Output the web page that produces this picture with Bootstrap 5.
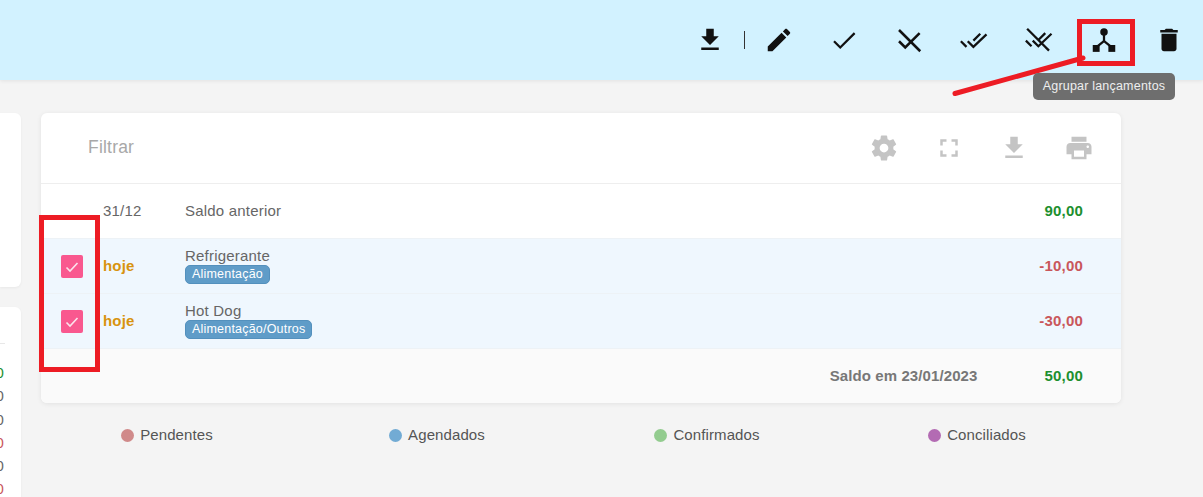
<!DOCTYPE html>
<html lang="pt-BR">
<head>
<meta charset="utf-8">
<title>Lançamentos</title>
<link rel="stylesheet" href="https://cdn.jsdelivr.net/npm/bootstrap@5.3.0/dist/css/bootstrap.min.css">
<style>
html,body{height:497px;overflow:hidden}
body{background:#f4f4f4;font-family:"Liberation Sans",Arial,sans-serif;color:#666;font-size:15px;letter-spacing:.2px;position:relative}
.top-strip{height:80px;background:#d2f2ff;padding-right:2px;box-shadow:0 1px 4px rgba(0,0,0,.08)}
.tool-btn{width:65px;height:80px;padding:0;border:0;background:none}
.tool-btn svg{width:30px;height:30px;fill:#111}
.tool-thin svg{fill:none;stroke:#111;stroke-width:1.8}
.tool-sep{width:1px;height:18px;background:#333;margin:0 1.5px}
.page-body{padding-top:33px}
.side-col{width:21px;margin-right:20px;flex:none}
.side-card{background:#fff;border-radius:0 6px 6px 0;box-shadow:0 1px 3px rgba(0,0,0,.05)}
.side-a{height:174px;margin-bottom:20px}
.side-b{height:200px;padding-top:36px;border-radius:0 6px 0 0}
.side-rule{width:5px;height:1px;background:#e8e8e8;margin-bottom:18px}
.side-num{height:23.3px;line-height:23px;padding-right:17px;white-space:nowrap;display:flex;justify-content:flex-end;font-size:14.5px}
.main-col{width:1080px;flex:none}
.sheet{background:#fff;border-radius:6px;box-shadow:0 1px 5px rgba(0,0,0,.08);overflow:hidden}
.sheet-head{height:71px;padding-left:47px;border-bottom:1px solid #eee}
.filter-label{font-size:17.5px;color:#a8a8a8;flex:1;padding-bottom:2px}
.head-icon{width:65px;display:flex;justify-content:center}
.head-icon svg{width:30px;height:30px;fill:#c4c4c4}
.head-icons{margin-right:9.500px}
.line{height:55px;border-bottom:1px solid #edf2f6;padding-top:1px}
.line-on{background:#eff7fe}
.line-sum{height:54px;background:#fafafa;border-bottom:0}
.cell-check{width:62px;flex:none;padding-left:20px}
.fake-check{width:22px;height:23px;background:#f9588f;border-radius:2px;display:flex;align-items:center;justify-content:center}
.fake-check svg{width:14px;height:14px;fill:none;stroke:#fbe3ec;stroke-width:1.600}
.cell-date{width:82px;flex:none}
.cell-today{color:#d8930f;font-weight:700}
.cell-desc{flex:1;line-height:15px;margin-bottom:1px}
.desc-single{margin-bottom:2px}
.amount{font-weight:700;margin-right:38px}
.pos{color:#1d8f2e}
.neg{color:#c9565a}
.sum-label{font-weight:700;color:#777;letter-spacing:.1px;margin-right:67px}
.cat-tag{display:inline-block;background:#5f9cc8;border:1px solid #5390bd;color:#fff;border-radius:5px;font-size:12.5px;font-weight:400;line-height:17px;padding:0 6px;vertical-align:top;margin-top:2px}
.legend-row{margin:21px 0 0;color:#555}
.legend-item{padding:0 18px 0 0;text-align:center;letter-spacing:.1px}
.dot{display:inline-block;width:13px;height:13px;border-radius:50%;margin-right:6px;vertical-align:-2px}
.mark-box{position:absolute;border:5px solid #ed1c24;pointer-events:none}
.mark-a{left:1077px;top:19px;width:58px;height:47px}
.mark-b{left:39px;top:215px;width:61px;height:157px}
.arrow-line{position:absolute;left:0;top:0;pointer-events:none}
.tip-box{position:absolute;left:1033px;top:73px;width:142px;height:27px;background:#6e6e6e;color:#eee;border-radius:5px;font-size:12.5px;line-height:27px;text-align:center}
</style>
</head>
<body>
<div class="top-strip d-flex justify-content-end align-items-center">
  <button class="tool-btn d-flex align-items-center justify-content-center"><svg viewBox="0 0 24 24"><path d="M19 9h-4V3H9v6H5l7 7 7-7zM5 18v2h14v-2H5z"/></svg></button>
  <div class="tool-sep"></div>
  <button class="tool-btn d-flex align-items-center justify-content-center"><svg viewBox="0 0 24 24"><path d="M3 17.250V21h3.750L17.810 9.940l-3.750-3.750L3 17.250zM20.710 7.040c.39-.39.39-1.020 0-1.410l-2.340-2.340c-.39-.39-1.020-.39-1.410 0l-1.830 1.830 3.750 3.750 1.830-1.830z"/></svg></button>
  <button class="tool-btn tool-thin d-flex align-items-center justify-content-center"><svg viewBox="0 0 24 24"><path d="M4 13l5 5L20.500 6.500"/></svg></button>
  <button class="tool-btn tool-thin d-flex align-items-center justify-content-center"><svg viewBox="0 0 24 24"><path d="M4 13l5 5L20.500 6.500" stroke-width="2"/><path d="M4 4l17 17" stroke-width="2"/></svg></button>
  <button class="tool-btn tool-thin d-flex align-items-center justify-content-center"><svg viewBox="0 0 24 24"><path d="M1.500 13l4.500 4.500M7 13l4.500 4.500L22 7.500M11.500 12.500l5.500-5.500"/></svg></button>
  <button class="tool-btn tool-thin d-flex align-items-center justify-content-center"><svg viewBox="0 0 24 24"><path d="M1.500 12.500l4.500 4.500M7 12.500l4.500 4.500L22 7M11.500 12l5.500-5.500"/><path d="M2.500 3l17.500 17.500"/></svg></button>
  <button class="tool-btn d-flex align-items-center justify-content-center"><svg viewBox="0 0 24 24"><circle cx="12" cy="5.500" r="3"/><rect x="3" y="16" width="5.500" height="5.500"/><rect x="15.500" y="16" width="5.500" height="5.500"/><path d="M11.100 7h1.800v5.300l5 4-1.200 1.400-4.700-3.800-4.700 3.800-1.200-1.400 5-4z"/></svg></button>
  <button class="tool-btn d-flex align-items-center justify-content-center"><svg viewBox="0 0 24 24"><path d="M6 19c0 1.100.9 2 2 2h8c1.100 0 2-.9 2-2V7H6v12zM19 4h-3.500l-1-1h-5l-1 1H5v2h14V4z"/></svg></button>
</div>

<div class="page-body d-flex">
  <div class="side-col">
    <div class="side-card side-a"></div>
    <div class="side-card side-b">
      <div class="side-rule"></div>
      <div class="side-num pos">0,00</div>
      <div class="side-num">0,00</div>
      <div class="side-num">0,00</div>
      <div class="side-num neg">0,00</div>
      <div class="side-num">0,00</div>
      <div class="side-num neg">0,00</div>
    </div>
  </div>
  <div class="main-col">
    <div class="sheet">
      <div class="sheet-head d-flex align-items-center">
        <div class="filter-label">Filtrar</div>
        <div class="head-icons d-flex">
          <div class="head-icon"><svg viewBox="0 0 24 24"><path d="M19.430 12.980c.04-.32.07-.64.07-.98s-.03-.66-.07-.98l2.110-1.650c.19-.15.24-.42.12-.64l-2-3.460c-.12-.22-.39-.3-.61-.22l-2.490 1c-.52-.4-1.080-.73-1.690-.98l-.38-2.650C14.460 2.180 14.250 2 14 2h-4c-.25 0-.46.18-.49.42l-.38 2.650c-.61.25-1.170.59-1.690.98l-2.490-1c-.23-.09-.49 0-.61.22l-2 3.460c-.13.22-.07.49.12.64l2.110 1.650c-.04.32-.07.65-.07.98s.03.66.07.98l-2.110 1.650c-.19.15-.24.42-.12.64l2 3.460c.12.22.39.3.61.22l2.490-1c.52.4 1.080.73 1.690.98l.38 2.650c.03.24.24.42.49.42h4c.25 0 .46-.18.49-.42l.38-2.650c.61-.25 1.170-.59 1.690-.98l2.490 1c.23.09.49 0 .61-.22l2-3.460c.12-.22.07-.49-.12-.64l-2.110-1.650zM12 15.500c-1.930 0-3.500-1.570-3.500-3.500s1.570-3.500 3.500-3.500 3.500 1.570 3.500 3.500-1.570 3.500-3.500 3.500z"/></svg></div>
          <div class="head-icon"><svg viewBox="0 0 24 24"><path d="M7 14H5v5h5v-2H7v-3zm-2-4h2V7h3V5H5v5zm12 7h-3v2h5v-5h-2v3zM14 5v2h3v3h2V5h-5z"/></svg></div>
          <div class="head-icon"><svg viewBox="0 0 24 24"><path d="M19 9h-4V3H9v6H5l7 7 7-7zM5 18v2h14v-2H5z"/></svg></div>
          <div class="head-icon"><svg viewBox="0 0 24 24"><path d="M19 8H5c-1.660 0-3 1.340-3 3v6h4v4h12v-4h4v-6c0-1.660-1.340-3-3-3zm-3 11H8v-5h8v5zm3-7c-.55 0-1-.45-1-1s.45-1 1-1 1 .45 1 1-.45 1-1 1zm-1-9H6v4h12V3z"/></svg></div>
        </div>
      </div>
      <div class="line d-flex align-items-center">
        <div class="cell-check"></div>
        <div class="cell-date">31/12</div>
        <div class="cell-desc desc-single">Saldo anterior</div>
        <div class="amount pos">90,00</div>
      </div>
      <div class="line line-on d-flex align-items-center">
        <div class="cell-check"><div class="fake-check"><svg viewBox="0 0 14 14"><path d="M1.500 7.500l3.500 3.500 7.500-8"/></svg></div></div>
        <div class="cell-date cell-today">hoje</div>
        <div class="cell-desc">Refrigerante<br><span class="cat-tag">Alimentação</span></div>
        <div class="amount neg">-10,00</div>
      </div>
      <div class="line line-on d-flex align-items-center">
        <div class="cell-check"><div class="fake-check"><svg viewBox="0 0 14 14"><path d="M1.500 7.500l3.500 3.500 7.500-8"/></svg></div></div>
        <div class="cell-date cell-today">hoje</div>
        <div class="cell-desc">Hot Dog<br><span class="cat-tag">Alimentação/Outros</span></div>
        <div class="amount neg">-30,00</div>
      </div>
      <div class="line line-sum d-flex align-items-center justify-content-end">
        <div class="sum-label">Saldo em 23/01/2023</div>
        <div class="amount pos">50,00</div>
      </div>
    </div>
    <div class="row legend-row">
      <div class="col-3 legend-item"><span class="dot" style="background:#d08a8a"></span>Pendentes</div>
      <div class="col-3 legend-item"><span class="dot" style="background:#72abd4"></span>Agendados</div>
      <div class="col-3 legend-item"><span class="dot" style="background:#93cc8f"></span>Confirmados</div>
      <div class="col-3 legend-item"><span class="dot" style="background:#b36bb3"></span>Conciliados</div>
    </div>
  </div>
</div>

<div class="mark-box mark-a"></div>
<div class="mark-box mark-b"></div>
<svg class="arrow-line" width="1203" height="497"><line x1="955" y1="93.500" x2="1083" y2="58" stroke="#ed1c24" stroke-width="5" stroke-linecap="round"/></svg>
<div class="tip-box">Agrupar lançamentos</div>

<script src="https://cdn.jsdelivr.net/npm/bootstrap@5.3.0/dist/js/bootstrap.bundle.min.js"></script>
</body>
</html>
